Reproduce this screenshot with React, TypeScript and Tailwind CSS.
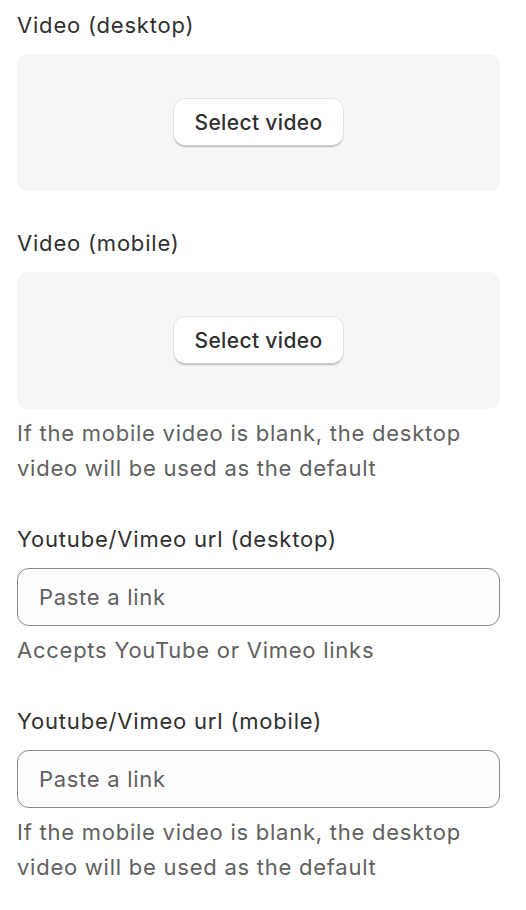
import React from "react";

const font = { fontFamily: "Inter, 'Noto Sans', sans-serif" };

function Label({ children }: { children: React.ReactNode }) {
  return (
    <div className="text-[22px] leading-[35px] tracking-[0.8px] text-[#303030] mb-[11px]">
      {children}
    </div>
  );
}

function Help({ children }: { children: React.ReactNode }) {
  return (
    <p className="mt-[7px] text-[22px] leading-[35px] tracking-[0.75px] text-[#616161]">
      {children}
    </p>
  );
}

function VideoPicker() {
  return (
    <div className="h-[137px] rounded-[10px] bg-[#f6f6f6] flex items-center justify-center">
      <button className="h-[50px] w-[171px] rounded-[12px] bg-white border border-[#e3e3e3] shadow-[inset_0_-2px_0_#c8c8c8] text-[21px] font-medium tracking-[0.35px] text-[#303030]">
        Select video
      </button>
    </div>
  );
}

function LinkInput() {
  return (
    <input
      type="text"
      placeholder="Paste a link"
      className="block w-full h-[58px] rounded-[12px] border border-[#8a8a8a] bg-[#fdfdfd] px-[21px] text-[22px] tracking-[0.7px] text-[#303030] placeholder:text-[#616161] outline-none"
    />
  );
}

export default function App() {
  return (
    <div className="w-[526px] bg-white pl-[17px] pr-[26px] pt-[8px] pb-10" style={font}>
      <section>
        <Label>Video (desktop)</Label>
        <VideoPicker />
      </section>

      <section className="mt-[35px]">
        <Label>Video (mobile)</Label>
        <VideoPicker />
        <Help>
          If the mobile video is blank, the desktop video will be used as the
          default
        </Help>
      </section>

      <section className="mt-[36px]">
        <Label>Youtube/Vimeo url (desktop)</Label>
        <LinkInput />
        <Help>Accepts YouTube or Vimeo links</Help>
      </section>

      <section className="mt-[36px]">
        <Label>Youtube/Vimeo url (mobile)</Label>
        <LinkInput />
        <Help>
          If the mobile video is blank, the desktop video will be used as the
          default
        </Help>
      </section>
    </div>
  );
}
